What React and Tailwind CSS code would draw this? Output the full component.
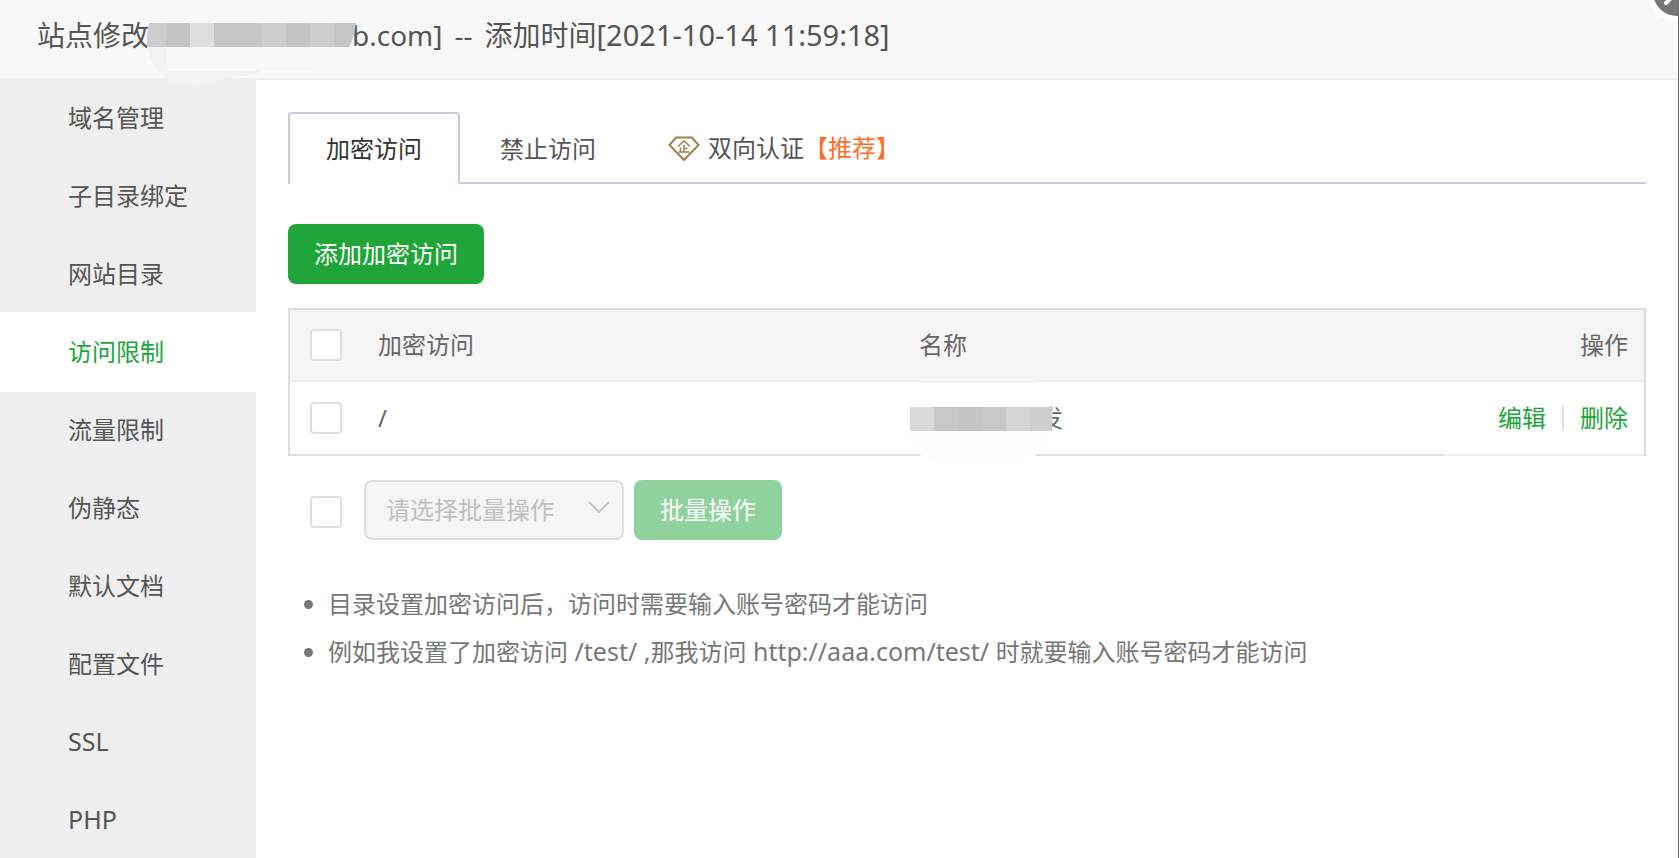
import React from "react";

const MENU = [
  "域名管理",
  "子目录绑定",
  "网站目录",
  "访问限制",
  "流量限制",
  "伪静态",
  "默认文档",
  "配置文件",
  "SSL",
  "PHP",
];

const CHECKBOX =
  "block size-8 shrink-0 appearance-none rounded-[4px] border-2 border-[#dcdfe6] bg-white checked:bg-[#20a53a]";

function TitleMask() {
  return (
    <svg className="absolute -left-1.5 top-0 h-[90px] w-[230px]" viewBox="143 0 230 90" aria-hidden="true">
      <path d="M147 46C151 66 166 87 195 87C210 87 219 79 224 78.500C240 77 262 73 263 71V46Z" fill="#f2f2f2" />
      <rect x="166" y="47" width="146" height="24" fill="#f8f8f8" />
      <rect x="262" y="71" width="50" height="1" fill="#fdfdfd" />
      <path d="M149 23H166V47H147C147 38 147 30 149 23Z" fill="#cdcdcd" />
      <rect x="166" y="23" width="24" height="24" fill="#c4c4c4" />
      <rect x="190" y="23" width="24" height="24" fill="#dedede" />
      <rect x="214" y="23" width="48" height="24" fill="#c5c5c5" />
      <rect x="262" y="23" width="24" height="24" fill="#cecece" />
      <rect x="286" y="23" width="24" height="24" fill="#c4c4c4" />
      <rect x="310" y="23" width="24" height="24" fill="#cecece" />
      <path d="M334 23H356C355 32 353 40 349 47H334Z" fill="#c5c5c5" />
    </svg>
  );
}

function NameMask() {
  return (
    <svg className="absolute -left-4 -top-[35px] h-[110px] w-[160px]" viewBox="903 367 160 110" aria-hidden="true">
      <path d="M916 383C930 374 940 368 956 368H1000C1016 368 1028 374 1038 383Z" fill="#f5f5f5" />
      <rect x="916" y="383" width="122" height="24" fill="#fff" />
      <path d="M905 431H1051C1044 452 1030 465 1006 465H950C926 465 912 452 905 431Z" fill="#fdfdfd" />
      <rect x="910" y="407" width="24" height="24" fill="#d9d9d9" />
      <rect x="934" y="407" width="24" height="24" fill="#c7c7c7" />
      <rect x="958" y="407" width="24" height="24" fill="#c4c4c4" />
      <rect x="982" y="407" width="24" height="24" fill="#c8c8c8" />
      <rect x="1006" y="407" width="24" height="24" fill="#d5d5d5" />
      <path d="M1030 407H1053L1052 431H1030Z" fill="#cecece" />
    </svg>
  );
}

function EnterpriseIcon() {
  return (
    <svg className="h-[26px] w-8 shrink-0" viewBox="0 0 32 26" fill="none" stroke="#a17f47" aria-hidden="true">
      <path d="M8 2.500H24L30.500 10L16 25L1.500 10Z" strokeWidth="2" />
      <path
        d="M10 11.500L16 6L22 11.500M16 10V17M16 13.500H19.500M12.500 12.500V17M10.500 17H21.500"
        strokeWidth="1.500"
      />
    </svg>
  );
}

function Header() {
  return (
    <header className="relative z-10 flex h-[78px] items-start bg-[#f8f8f8] pl-[37px] text-[28px] leading-[70px] text-[#555]">
      <h1 className="flex">
        <span>站点修改</span>
        <span className="relative w-[203px]">
          <TitleMask />
        </span>
        <span>b.com]</span>
        <span className="px-3">--</span>
        <span>
          添加时间<span className="text-[29px]">[2021-10-14 11:59:18]</span>
        </span>
      </h1>
      <button type="button" aria-label="关闭" className="absolute right-0 top-0 h-[22px] w-[31px]">
        <svg className="block h-[22px] w-[31px]" viewBox="0 0 31 22" aria-hidden="true">
          <circle cx="30" cy="-8" r="30" fill="#fff" />
          <circle cx="30" cy="-8" r="24" fill="#777" />
          <path d="M19 3L41 -19M41 3L19 -19" stroke="#fff" strokeWidth="4" strokeLinecap="round" />
        </svg>
      </button>
    </header>
  );
}

function Sidebar() {
  return (
    <nav className="-mt-0.5 w-64 shrink-0 bg-[#efefef]">
      {MENU.map((label) => (
        <a
          key={label}
          href="#"
          className={
            label === "访问限制"
              ? "relative -mb-0.5 block h-20 bg-white pl-[68px] leading-[80px] text-[#20a53a]"
              : /^[A-Z]+$/.test(label)
                ? "block h-[78px] pl-[68px] text-[25px] leading-[78px] text-[#555]"
                : "block h-[78px] pl-[68px] leading-[80px] text-[#555]"
          }
        >
          {label}
        </a>
      ))}
    </nav>
  );
}

function Tabs() {
  return (
    <div className="flex h-[72px] leading-[70px] text-[#555]" role="tablist">
      <button
        type="button"
        role="tab"
        aria-selected="true"
        className="rounded-t-[4px] rounded-br-[2px] border-2 border-b-0 border-[#ccc9db] px-9 text-[#333]"
      >
        加密访问
      </button>
      <div className="-ml-0.5 flex flex-1 rounded-bl-[4px] border-b-2 border-[#ccc9db] pt-0.5">
        <button type="button" role="tab" aria-selected="false" className="pl-[42px] pr-10">
          禁止访问
        </button>
        <button type="button" role="tab" aria-selected="false" className="flex items-center pl-8">
          <EnterpriseIcon />
          <span className="pl-2">双向认证</span>
          <span className="text-[#ff6d26]">【推荐】</span>
        </button>
      </div>
    </div>
  );
}

function AccessTable() {
  return (
    <div className="mt-6 border-2 border-b-0 border-[#ddd]">
      <table className="w-full table-fixed border-separate border-spacing-0 text-left text-[#666]">
        <colgroup>
          <col className="w-[72px]" />
          <col />
          <col />
          <col className="w-[200px]" />
        </colgroup>
        <thead>
          <tr className="h-[72px] bg-[#f5f5f5]">
            <th className="border-b-2 border-[#ebeef5] pl-5">
              <input type="checkbox" aria-label="全选" className={CHECKBOX} />
            </th>
            <th className="border-b-2 border-[#ebeef5] px-4 font-normal">加密访问</th>
            <th className="border-b-2 border-[#ebeef5] px-4 font-normal">名称</th>
            <th className="border-b-2 border-[#ebeef5] px-4 text-right font-normal">操作</th>
          </tr>
        </thead>
        <tbody>
          <tr className="h-[74px]">
            <td className="border-b-2 border-[#ddd] pl-5">
              <input type="checkbox" aria-label="选择 /" className={CHECKBOX} />
            </td>
            <td className="border-b-2 border-[#ddd] px-4">/</td>
            <td className="border-b-2 border-[#ddd] px-4">
              <div className="relative pl-[120px]">
                发
                <NameMask />
              </div>
            </td>
            <td className="border-b-2 border-[#ebeef5] px-4">
              <div className="flex items-center justify-end gap-4 text-[#20a53a]">
                <a href="#">编辑</a>
                <span className="h-6 w-0.5 bg-[#dcdfe6]" />
                <a href="#">删除</a>
              </div>
            </td>
          </tr>
        </tbody>
      </table>
    </div>
  );
}

function BatchBar() {
  return (
    <div className="mt-6 flex items-center pl-[22px]">
      <div className="pt-1">
        <input type="checkbox" aria-label="批量选择" className={CHECKBOX} />
      </div>
      <div className="relative ml-[22px]">
        <select
          disabled
          aria-label="批量操作类型"
          className="block h-[60px] w-[260px] appearance-none rounded-lg border-2 border-[#ddd] bg-[#f5f5f5] pl-5 text-[#c0c0c0] opacity-100"
        >
          <option>请选择批量操作</option>
        </select>
        <svg
          className="absolute right-[14px] top-[21px] h-3 w-[22px]"
          viewBox="0 0 22 12"
          fill="none"
          stroke="#c0c4cc"
          strokeWidth="2"
          aria-hidden="true"
        >
          <path d="M1 1L11 11L21 1" />
        </svg>
      </div>
      <button type="button" disabled className="ml-2.5 h-[60px] rounded-lg bg-[#90d29d] px-[26px] text-white">
        批量操作
      </button>
    </div>
  );
}

export default function App() {
  return (
    <div className="flex min-h-screen flex-col overflow-hidden border-r border-[#666] bg-white font-['Noto_Sans','Noto_Sans_CJK_SC',sans-serif] text-2xl">
      <Header />
      <div className="flex flex-1 border-t-2 border-[#eee]">
        <Sidebar />
        <main className="min-w-0 flex-1 pl-8 pr-8 pt-8">
          <Tabs />
          <button type="button" className="mt-10 block h-[60px] rounded-lg bg-[#20a53a] px-[26px] text-white">
            添加加密访问
          </button>
          <AccessTable />
          <BatchBar />
          <ul className="mt-10 list-disc pl-10 leading-[48px] text-[#777]">
            <li>目录设置加密访问后，访问时需要输入账号密码才能访问</li>
            <li>
              例如我设置了加密访问<span className="text-[25px] leading-none"> /test/ ,</span>那我访问
              <span className="text-[25px] leading-none"> http://aaa.com/test/ </span>时就要输入账号密码才能访问
            </li>
          </ul>
        </main>
      </div>
    </div>
  );
}
